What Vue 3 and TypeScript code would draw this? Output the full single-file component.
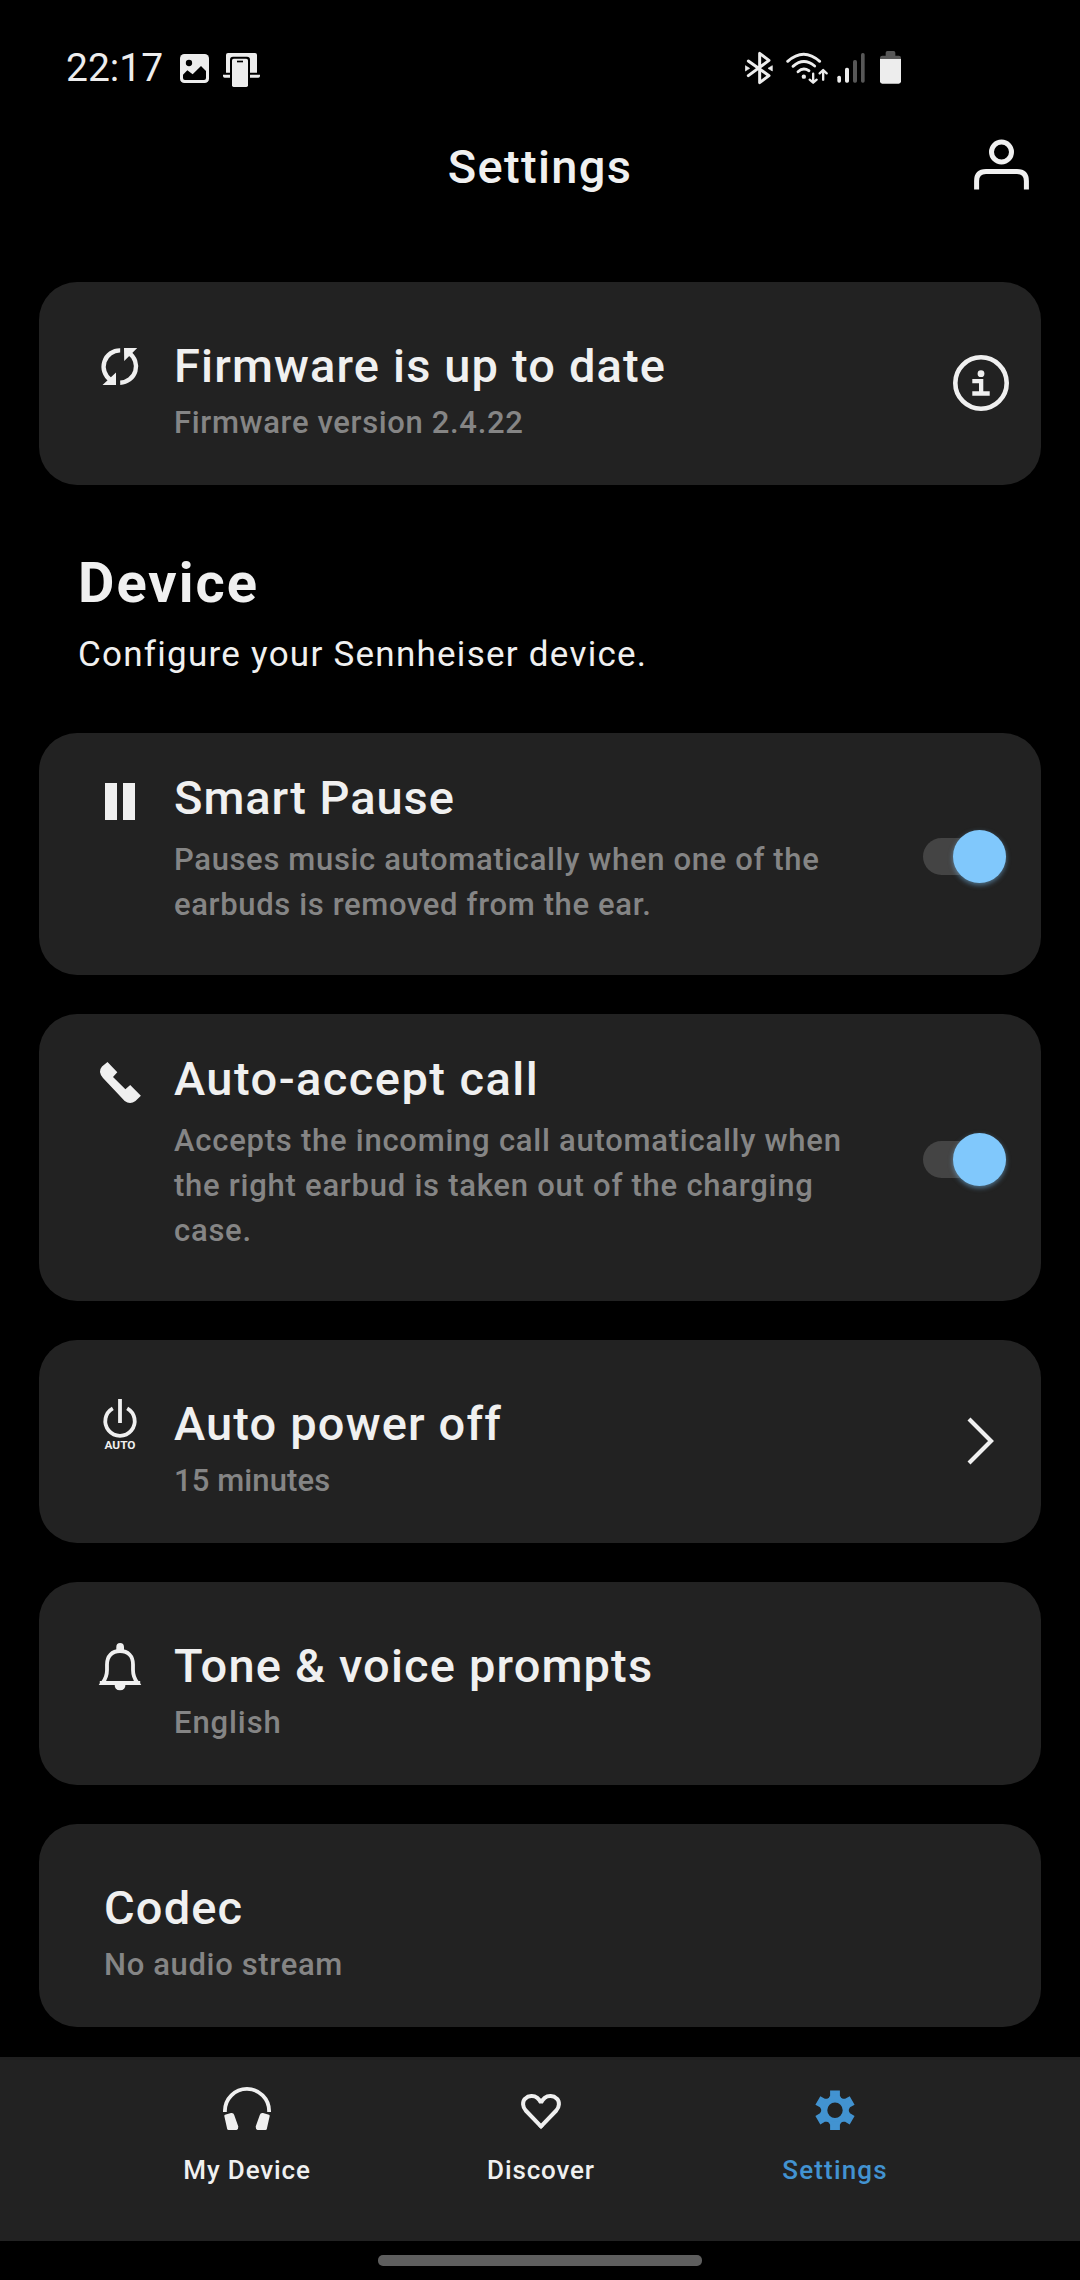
<script setup lang="ts">
interface Setting {
  id: string
  title: string
  text: string
  long?: boolean
  control?: 'info' | 'toggle' | 'chevron'
}

const firmware: Setting = {
  id: 'firmware',
  title: 'Firmware is up to date',
  text: 'Firmware version 2.4.22',
  control: 'info',
}

const deviceSettings: Setting[] = [
  {
    id: 'pause',
    title: 'Smart Pause',
    text: 'Pauses music automatically when one of the earbuds is removed from the ear.',
    long: true,
    control: 'toggle',
  },
  {
    id: 'call',
    title: 'Auto-accept call',
    text: 'Accepts the incoming call automatically when the right earbud is taken out of the charging case.',
    long: true,
    control: 'toggle',
  },
  { id: 'power', title: 'Auto power off', text: '15 minutes', control: 'chevron' },
  { id: 'tone', title: 'Tone & voice prompts', text: 'English' },
  { id: 'codec', title: 'Codec', text: 'No audio stream' },
]

const groups: { id: string; heading?: string; intro?: string; items: Setting[] }[] = [
  { id: 'update', items: [firmware] },
  {
    id: 'device',
    heading: 'Device',
    intro: 'Configure your Sennheiser device.',
    items: deviceSettings,
  },
]

const gearTeeth = [0, 60, 120, 180, 240, 300]
</script>

<template>
  <div class="screen">
    <div class="status">
      <span class="clock">22:17</span>
      <svg class="st-picture" width="29" height="29" viewBox="420 72 87 87">
        <rect x="420" y="72" width="87" height="87" rx="13" fill="#ededed" />
        <circle cx="447" cy="99" r="9.5" fill="#000" />
        <path d="M429 134L442 121L458 133L483 108L498 123V144Q498 150 492 150H435Q429 150 429 144Z" fill="#000" />
      </svg>
      <svg class="st-phone" width="37" height="34" viewBox="549 69 111 102">
        <path d="M558 128V75Q558 69 564 69H645Q651 69 651 75V128Z" fill="#ededed" />
        <path d="M549 134H660V138Q660 143 655 143H554Q549 143 549 138Z" fill="#ededed" />
        <path d="M570 171V89Q570 80 579 80H621Q630 80 630 89V171Z" fill="#000" />
        <rect x="576" y="86" width="48" height="85" rx="5" fill="#ededed" />
        <rect x="591" y="92" width="18" height="5" fill="#000" />
      </svg>
      <span class="spacer"></span>
      <svg class="st-bt" width="28" height="34" viewBox="75 64 84 102">
        <path
          d="M85 94L147 138L119 159V71L147 92L85 138"
          fill="none" stroke="#ededed" stroke-width="9" stroke-linecap="round" stroke-linejoin="round"
        />
        <path d="M76 108L89 116L76 124ZM157 108L144 116L157 124Z" fill="#ededed" stroke="#ededed" stroke-width="2" />
      </svg>
      <svg class="st-wifi" width="42" height="34" viewBox="198 61 126 102">
        <g fill="none" stroke="#ededed" stroke-width="8.5" stroke-linecap="round" stroke-linejoin="round">
          <path d="M203 92Q251 49 299 92" />
          <path d="M219 107Q251 78 284 106" />
          <path d="M234 123Q249 109 267 120" />
          <path d="M279.500 129V155M269 147L279.500 156L290 147" stroke-width="7" />
          <path d="M309.500 147V119M299 128L309.500 118L320 128" stroke-width="7" />
        </g>
        <circle cx="251.500" cy="138" r="6.500" fill="#ededed" />
      </svg>
      <svg class="st-signal" width="28" height="30" viewBox="351 68 84 90">
        <rect x="352" y="136" width="11" height="21" rx="5" fill="#ededed" />
        <rect x="375" y="112" width="12" height="45" rx="5" fill="#ededed" />
        <rect x="399" y="89" width="12" height="68" rx="5" fill="#575757" />
        <rect x="423" y="68" width="11" height="89" rx="5" fill="#575757" />
      </svg>
      <svg class="st-battery" width="21" height="33" viewBox="480 63 63 99">
        <path d="M480 88V84Q480 77 487 77H497V68Q497 63 502 63H521Q526 63 526 68V77H536Q543 77 543 84V88Z" fill="#575757" />
        <path d="M480 87H543V154Q543 161 536 161H487Q480 161 480 154Z" fill="#ededed" />
      </svg>
    </div>

    <header class="header">
      <h1>Settings</h1>
      <svg class="profile" width="55" height="51" viewBox="0 0 55 51" fill="none" stroke="#f0f0f0" stroke-width="5">
        <circle cx="27.500" cy="13" r="10" />
        <path d="M2.600 50.500V42Q2.600 32.500 12 32.500H43Q52.400 32.500 52.400 42V50.500" />
      </svg>
    </header>

    <main class="content">
      <section v-for="group in groups" :key="group.id" class="group">
        <div v-if="group.heading" class="intro">
          <h2>{{ group.heading }}</h2>
          <p>{{ group.intro }}</p>
        </div>

        <article
          v-for="item in group.items"
          :key="item.id"
          class="card"
          :class="[item.id, { long: item.long }]"
        >
          <svg v-if="item.id !== 'codec'" class="icon" width="60" height="60" viewBox="0 0 60 60">
            <g v-if="item.id === 'firmware'">
              <path d="M30.200 12.400A16.300 16.300 0 0 0 20.500 42M39 15A16.300 16.300 0 0 1 30.200 44.700" fill="none" stroke="#f0f0f0" stroke-width="4.400" />
              <path d="M12.500 47L26 47V34.500ZM34 10H47.200L34.200 23Z" fill="#f0f0f0" />
            </g>
            <path v-else-if="item.id === 'pause'" d="M15 13H27V50H15ZM33 13H45V50H33Z" fill="#f0f0f0" />
            <path
              v-else-if="item.id === 'call'"
              d="M17.500 11L27.300 21.300L23 26L35.400 38.300L40.200 34L50.900 44.700L45.500 50Q40 54 34.700 50L13 27Q7.500 20.500 12 15.500Z"
              fill="#f0f0f0"
            />
            <g v-else-if="item.id === 'power'">
              <path d="M30 3V27M22.800 12.300A14.700 14.700 0 1 0 37.200 12.300" fill="none" stroke="#f0f0f0" stroke-width="3.800" />
              <text x="30" y="53" text-anchor="middle" class="auto" textLength="31" lengthAdjust="spacingAndGlyphs">AUTO</text>
            </g>
            <g v-else>
              <path
                d="M12.500 45C15.500 41 17 38 17 32V26.500C17 18 22 13 30 13S43 18 43 26.500V32C43 38 44.500 41 47.500 45Z"
                fill="none" stroke="#f0f0f0" stroke-width="3.800"
              />
              <path d="M26.300 13V9Q26.300 5 30.100 5T34 9V13Z" fill="#f0f0f0" />
              <path d="M9.800 43H50.200V47H9.800ZM24.600 46H35.500Q35.500 52.300 30 52.300T24.600 46Z" fill="#f0f0f0" />
            </g>
          </svg>

          <div class="text">
            <h3>{{ item.title }}</h3>
            <p>{{ item.text }}</p>
          </div>

          <svg v-if="item.control === 'info'" class="info" width="56" height="56" viewBox="0 0 56 56">
            <circle cx="28" cy="28" r="25.700" fill="none" stroke="#f0f0f0" stroke-width="4.600" />
            <circle cx="28" cy="18.700" r="3.400" fill="#f0f0f0" />
            <path d="M19.300 24H30.300V36.300H36.700V40.700H19.300V36.300H26V28.300H19.300Z" fill="#f0f0f0" />
          </svg>
          <div v-else-if="item.control === 'toggle'" class="toggle"><span class="thumb"></span></div>
          <svg v-else-if="item.control === 'chevron'" class="chevron" width="28" height="48" viewBox="0 0 28 48">
            <path d="M2 2L24 24L2 46" fill="none" stroke="#f0f0f0" stroke-width="4.200" />
          </svg>
        </article>
      </section>
    </main>

    <nav class="tabs">
      <div class="tab">
        <svg width="48" height="44" viewBox="0 0 48 44">
          <path d="M1.900 25V24A22.100 22.100 0 0 1 46.100 24V25" fill="none" stroke="#f0f0f0" stroke-width="3.800" />
          <path d="M1.300 29Q1.200 28.200 2 27.800L8 26.100Q10.600 25.700 11.200 28L15.300 39.500Q15.500 42 13.600 43H5.500Q4.400 43 4.200 42Z" fill="#f0f0f0" />
          <path d="M46.700 29Q46.800 28.200 46 27.800L40 26.100Q37.400 25.700 36.800 28L32.700 39.500Q32.500 42 34.400 43H42.500Q43.600 43 43.800 42Z" fill="#f0f0f0" />
        </svg>
        <span>My Device</span>
      </div>
      <div class="tab">
        <svg width="48" height="44" viewBox="0 0 48 44">
          <path
            d="M24 39.300L8.700 23.500C5.600 20 5 14.600 8.300 11.600C11.500 8.400 17 8.400 20.300 10.800Q23 12.900 24 16Q25 12.900 27.700 10.800C31 8.400 36.500 8.400 39.700 11.600C43 14.600 42.400 20 39.300 23.500Z"
            fill="none" stroke="#f0f0f0" stroke-width="4" stroke-linejoin="bevel"
          />
          <path d="M24 42.300L21.300 39.200L24 37L26.700 39.200Z" fill="#f0f0f0" />
        </svg>
        <span>Discover</span>
      </div>
      <div class="tab active">
        <svg width="48" height="44" viewBox="0 0 48 44">
          <g transform="translate(24 23.300)">
            <circle r="10.700" fill="none" stroke="#4293d1" stroke-width="6" />
            <path v-for="a in gearTeeth" :key="a" :transform="`rotate(${a})`" d="M-4.900 -19.800H4.900V-14.500L7 -11H-7L-4.900 -14.500Z" fill="#4293d1" />
          </g>
        </svg>
        <span>Settings</span>
      </div>
    </nav>
    <div class="gesture"><span></span></div>
  </div>
</template>

<style>
body {
  background: #000;
}
</style>

<style scoped>
.screen {
  width: 1080px;
  height: 2280px;
  overflow: hidden;
  display: flex;
  flex-direction: column;
  background: #000;
  color: #f0f0f0;
  font-family: Roboto, "Liberation Sans", sans-serif;
}
h1, h2, h3, p {
  margin: 0;
}
svg {
  display: block;
  flex: none;
}
.status {
  display: flex;
  align-items: flex-start;
  height: 137px;
  flex: none;
  box-sizing: border-box;
  padding: 51px 179px 0 66px;
}
.clock {
  width: 114px;
  font-size: 39px;
  line-height: 34px;
  color: #ededed;
  white-space: nowrap;
}
.spacer {
  flex: 1;
}
.st-picture { margin-top: 3px; }
.st-phone { margin: 2px 0 0 14px; }
.st-bt { margin-right: 13px; }
.st-wifi { margin-right: 9px; }
.st-signal { margin: 2px 15px 0 0; }
.header {
  display: flex;
  flex: none;
  height: 145px;
  align-items: flex-start;
  padding: 0 51px 0 106px;
}
.header h1 {
  flex: 1;
  text-align: center;
  font-size: 47px;
  line-height: 60px;
  font-weight: 500;
  letter-spacing: 1.3px;
}
.profile {
  margin-top: 2px;
}
.content {
  flex: 1;
  min-height: 0;
  overflow: hidden;
  padding: 0 39px;
}
.group {
  display: flex;
  flex-direction: column;
  gap: 39px;
}
.intro {
  padding: 66px 0 18px 39px;
}
.intro h2 {
  font-size: 56px;
  line-height: 64px;
  font-weight: 700;
  letter-spacing: 2px;
}
.intro p {
  margin-top: 19px;
  font-size: 35px;
  line-height: 42px;
  letter-spacing: 1.26px;
}
.card {
  display: flex;
  align-items: center;
  box-sizing: border-box;
  height: 203px;
  border-radius: 38px;
  background: #222;
  padding: 0 31px 0 51px;
}
.card.long {
  height: auto;
}
.icon {
  align-self: flex-start;
  margin-top: 56px;
  margin-right: 24px;
}
.long .icon {
  margin-top: 37px;
}
.auto {
  font-size: 11.5px;
  font-weight: 700;
  fill: #f0f0f0;
}
.text {
  flex: 1;
  align-self: flex-start;
  padding-top: 56px;
}
.long .text {
  padding: 37px 0 48px;
}
.codec .text {
  padding-left: 14px;
}
.text h3 {
  font-size: 47px;
  line-height: 56px;
  font-weight: 500;
  letter-spacing: 1.15px;
}
.pause h3 { letter-spacing: 0.95px; }
.call h3 { letter-spacing: 1.45px; }
.text p {
  margin-top: 6px;
  max-width: 680px;
  font-size: 31px;
  line-height: 45px;
  font-weight: 500;
  color: #858585;
  letter-spacing: 0.65px;
}
.call p { letter-spacing: 0.75px; }
.power p { letter-spacing: 0.1px; }
.tone p { letter-spacing: 0.9px; }
.long .text p {
  margin-top: 11px;
}
.info {
  margin: 0 1px 1px 0;
}
.chevron {
  margin: 0 15px 1px 0;
}
.toggle {
  display: flex;
  justify-content: flex-end;
  align-items: center;
  width: 83px;
  height: 37px;
  margin-top: 4px;
  margin-right: 4px;
  border-radius: 19px;
  background: #444;
}
.call .toggle {
  margin-top: 3px;
}
.thumb {
  flex: none;
  width: 53px;
  height: 53px;
  border-radius: 50%;
  background: #80c8fc;
  box-shadow: 0 2px 5px rgba(128, 200, 252, 0.5);
}
.tabs {
  display: flex;
  flex: none;
  box-sizing: border-box;
  height: 184px;
  padding: 27px 98px 0 100px;
  border-top: 3px solid #1f1f1f;
  background: #222;
}
.tab {
  flex: 1;
  display: flex;
  flex-direction: column;
  align-items: center;
}
.tab span {
  margin-top: 23px;
  font-size: 26px;
  line-height: 32px;
  font-weight: 500;
  letter-spacing: 0.85px;
}
.tab.active {
  color: #4293d1;
}
.tab.active span {
  letter-spacing: 1.15px;
}
.gesture {
  flex: none;
  height: 39px;
  display: flex;
  justify-content: center;
}
.gesture span {
  width: 324px;
  height: 11px;
  margin-top: 14px;
  border-radius: 5px;
  background: #5e5e5e;
}
</style>
